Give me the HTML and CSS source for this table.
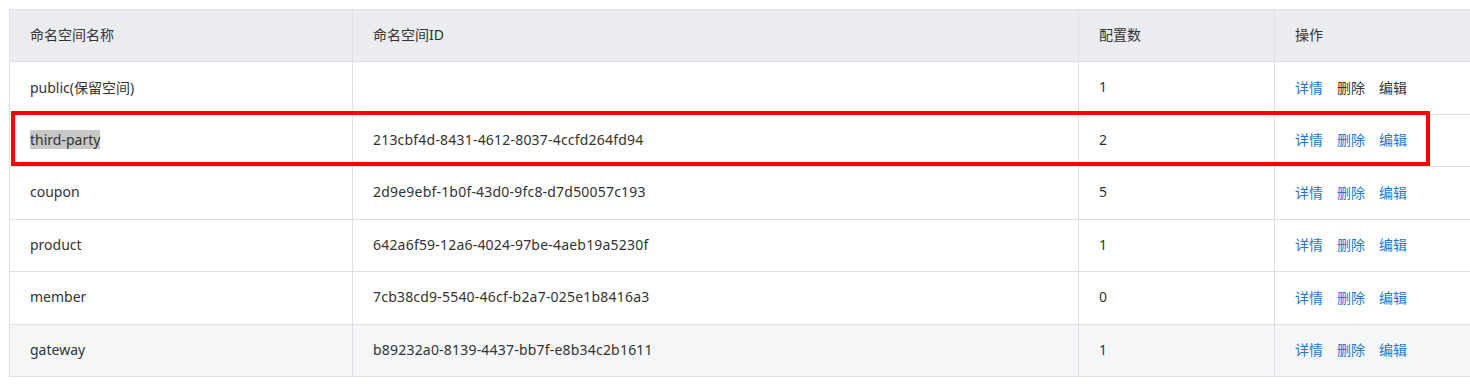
FILE: index.html
```html
<!DOCTYPE html>
<html lang="zh-CN">
<head>
<meta charset="utf-8">
<title>命名空间</title>
<link rel="stylesheet" href="styles.css">
</head>
<body>
<div class="wrap">
  <table class="ns-table">
    <colgroup>
      <col class="c-name"><col class="c-id"><col class="c-count"><col class="c-op">
    </colgroup>
    <thead>
      <tr><th>命名空间名称</th><th>命名空间ID</th><th>配置数</th><th>操作</th></tr>
    </thead>
    <tbody>
      <tr>
        <td>public(保留空间)</td><td></td><td>1</td>
        <td><div class="ops"><a class="link">详情</a><a class="link disabled">删除</a><a class="link disabled">编辑</a></div></td>
      </tr>
      <tr>
        <td><span class="selected">third-party</span></td><td class="mono-ish">213cbf4d-8431-4612-8037-4ccfd264fd94</td><td>2</td>
        <td><div class="ops"><a class="link">详情</a><a class="link">删除</a><a class="link">编辑</a></div></td>
      </tr>
      <tr>
        <td>coupon</td><td class="mono-ish">2d9e9ebf-1b0f-43d0-9fc8-d7d50057c193</td><td>5</td>
        <td><div class="ops"><a class="link">详情</a><a class="link">删除</a><a class="link">编辑</a></div></td>
      </tr>
      <tr>
        <td>product</td><td class="mono-ish">642a6f59-12a6-4024-97be-4aeb19a5230f</td><td>1</td>
        <td><div class="ops"><a class="link">详情</a><a class="link">删除</a><a class="link">编辑</a></div></td>
      </tr>
      <tr>
        <td>member</td><td class="mono-ish">7cb38cd9-5540-46cf-b2a7-025e1b8416a3</td><td>0</td>
        <td><div class="ops"><a class="link">详情</a><a class="link">删除</a><a class="link">编辑</a></div></td>
      </tr>
      <tr class="hover">
        <td>gateway</td><td class="mono-ish">b89232a0-8139-4437-bb7f-e8b34c2b1611</td><td>1</td>
        <td><div class="ops"><a class="link">详情</a><a class="link">删除</a><a class="link">编辑</a></div></td>
      </tr>
    </tbody>
  </table>
  <div class="highlight-box"></div>
</div>
</body>
</html>
```

FILE: styles.css
```css
html, body {
  margin: 0;
  padding: 0;
  background: #fff;
  overflow: hidden;
}
body {
  font-family: "Noto Sans", "Noto Sans CJK SC", sans-serif;
  font-size: 14px;
  color: #333;
}
.wrap {
  position: relative;
  padding: 9px 0 0 9px;
}
.ns-table {
  border-collapse: collapse;
  width: 1500px;
  table-layout: fixed;
}
.c-name { width: 343px; }
.c-id { width: 726px; }
.c-count { width: 196px; }
.c-op { width: 235px; }
.ns-table th,
.ns-table td {
  border: 1px solid #dfe0e6;
  padding: 0 20px 2px;
  text-align: left;
  font-weight: normal;
  white-space: nowrap;
}
.ns-table th {
  height: 48px;
  padding-bottom: 3px;
  background: #ebecf0;
  color: #333;
}
.ns-table td {
  height: 49.5px;
}
.ns-table td.mono-ish {
  letter-spacing: 0.2px;
}
.ns-table tr.hover td {
  background: #f5f6f8;
}
.ops {
  display: flex;
  gap: 14px;
}
.link {
  color: #1f76d8;
  cursor: pointer;
}
.link.disabled {
  color: #333;
}
.selected {
  background: #c8c8c8;
}
.highlight-box {
  position: absolute;
  left: 11px;
  top: 111px;
  width: 1411px;
  height: 47px;
  border: 4px solid #fe0000;
  border-radius: 1px;
}
```
